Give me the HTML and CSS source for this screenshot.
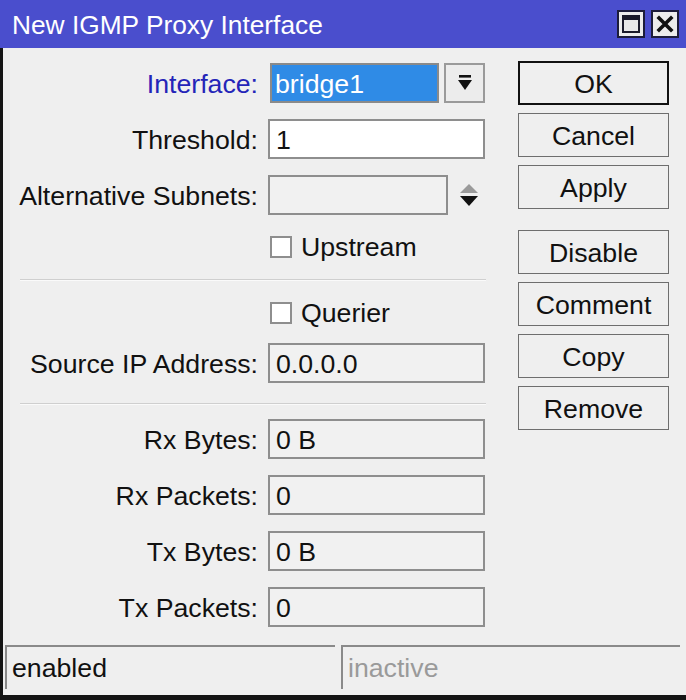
FILE: index.html
```html
<!DOCTYPE html>
<html>
<head>
<meta charset="utf-8">
<link rel="stylesheet" href="styles.css">
</head>
<body>
<div class="window">
  <div class="titlebar">
    <span class="title">New IGMP Proxy Interface</span>
    <div class="tbtns">
      <span class="tbtn">
        <svg width="24" height="24" viewBox="0 0 24 24"><rect x="4" y="4" width="16" height="16" fill="#e8e8e8" stroke="#1a1a2a" stroke-width="2"/><rect x="4" y="4" width="16" height="4" fill="#1a1a2a"/></svg>
      </span>
      <span class="tbtn">
        <svg width="24" height="24" viewBox="0 0 24 24"><path d="M6 6 L18 18 M18 6 L6 18" stroke="#111" stroke-width="3.6" stroke-linecap="square"/></svg>
      </span>
    </div>
  </div>
  <div class="body">
    <div class="main">
      <div class="form">
        <div class="row r1">
          <label class="lbl blue">Interface:</label>
          <div class="ctrl">
            <div class="field sel">bridge1</div>
            <div class="dropbtn">
              <svg width="18" height="20" viewBox="0 0 18 20"><rect x="3" y="2" width="12" height="2.6" fill="#111"/><path d="M2 7 H16 L9 17 Z" fill="#111"/></svg>
            </div>
          </div>
        </div>
        <div class="row r2">
          <label class="lbl">Threshold:</label>
          <div class="ctrl"><div class="field white full">1</div></div>
        </div>
        <div class="row r2">
          <label class="lbl">Alternative Subnets:</label>
          <div class="ctrl">
            <div class="field alt"></div>
            <div class="spinner">
              <svg width="22" height="24" viewBox="0 0 22 24"><path d="M2 10 L11 1 L20 10 Z" fill="#9a9a9a"/><path d="M2 13 L20 13 L11 23 Z" fill="#111"/></svg>
            </div>
          </div>
        </div>
        <div class="row chkrow r2">
          <span class="lbl"></span>
          <div class="ctrl"><span class="chk"></span><span class="chktxt">Upstream</span></div>
        </div>
        <div class="sep s1"></div>
        <div class="row chkrow r-q">
          <span class="lbl"></span>
          <div class="ctrl"><span class="chk"></span><span class="chktxt">Querier</span></div>
        </div>
        <div class="row r-src">
          <label class="lbl">Source IP Address:</label>
          <div class="ctrl"><div class="field full">0.0.0.0</div></div>
        </div>
        <div class="sep s2"></div>
        <div class="row r-src">
          <label class="lbl">Rx Bytes:</label>
          <div class="ctrl"><div class="field full">0 B</div></div>
        </div>
        <div class="row r2">
          <label class="lbl">Rx Packets:</label>
          <div class="ctrl"><div class="field full">0</div></div>
        </div>
        <div class="row r2">
          <label class="lbl">Tx Bytes:</label>
          <div class="ctrl"><div class="field full">0 B</div></div>
        </div>
        <div class="row r2">
          <label class="lbl">Tx Packets:</label>
          <div class="ctrl"><div class="field full">0</div></div>
        </div>
      </div>
      <div class="buttons">
        <div class="btn ok">OK</div>
        <div class="btn">Cancel</div>
        <div class="btn">Apply</div>
        <div class="btn grp">Disable</div>
        <div class="btn">Comment</div>
        <div class="btn">Copy</div>
        <div class="btn">Remove</div>
      </div>
    </div>
    <div class="status">
      <div class="panel p1">enabled</div>
      <div class="panel p2">inactive</div>
    </div>
  </div>
</div>
</body>
</html>
```
FILE: styles.css
```css
html, body {
  margin: 0;
  padding: 0;
  background: #efefef;
}
.window {
  width: 686px;
  height: 700px;
  display: flex;
  flex-direction: column;
  font-family: "Liberation Sans", Arial, sans-serif;
  font-size: 26.7px;
  color: #111;
  overflow: hidden;
}
.titlebar {
  height: 48px;
  flex: none;
  background: #4a4ecd;
  display: flex;
  align-items: center;
  justify-content: space-between;
  padding: 0 7px 0 12px;
  box-sizing: border-box;
}
.title {
  color: #fff;
  font-size: 26.3px;
  padding-top: 2px;
}
.tbtns {
  display: flex;
  gap: 6px;
}
.tbtn {
  width: 28px;
  height: 28px;
  box-sizing: border-box;
  background: #ececec;
  border: 2px solid #1c1c3a;
  display: flex;
  align-items: center;
  justify-content: center;
}
.body {
  flex: 1;
  display: flex;
  flex-direction: column;
  border-left: 3px solid #141414;
  border-bottom: 5px solid #141414;
  background: #efefef;
}
.main {
  flex: 1;
  display: flex;
}
.form {
  width: 482px;
  display: flex;
  flex-direction: column;
}
.row {
  display: flex;
  align-items: center;
  height: 40px;
}
.r1 { margin-top: 15px; }
.r2 { margin-top: 16px; }
.r-q { margin-top: 16px; }
.r-src { margin-top: 14px; }
.chkrow { height: 32px; }
.lbl {
  width: 255px;
  flex: none;
  text-align: right;
  white-space: nowrap;
  padding-top: 2px;
}
.blue { color: #2424b8; }
.ctrl {
  margin-left: 10px;
  display: flex;
  align-items: center;
  width: 217px;
  height: 100%;
}
.field {
  box-sizing: border-box;
  height: 40px;
  border: 2px solid #8e8e8e;
  background: #f1f1f1;
  padding-left: 6px;
  padding-top: 2px;
  display: flex;
  align-items: center;
  white-space: nowrap;
}
.full { width: 217px; }
.white { background: #fff; }
.sel {
  width: 171px;
  margin-left: 2px;
  background: #2f8be6;
  color: #fff;
  padding-left: 3px;
  border-color: #8a8a8a;
}
.dropbtn {
  box-sizing: border-box;
  width: 41px;
  height: 40px;
  margin-left: 5px;
  border: 2px solid #9a9a9a;
  background: #ececec;
  display: flex;
  align-items: center;
  justify-content: center;
}
.alt { width: 180px; }
.spinner {
  margin-left: 10px;
  display: flex;
  align-items: center;
}
.chk {
  width: 22px;
  height: 22px;
  box-sizing: border-box;
  border: 2px solid #8e8e8e;
  background: #fff;
  margin-left: 2px;
}
.chktxt { margin-left: 9px; }
.sep {
  margin-left: 17px;
  width: 466px;
  height: 1px;
  background: #cfcfcf;
  border-bottom: 1px solid #fafafa;
}
.s1 { margin-top: 16px; }
.s2 { margin-top: 20px; }
.buttons {
  margin-left: 33px;
  padding-top: 13px;
  display: flex;
  flex-direction: column;
  gap: 8px;
}
.btn {
  box-sizing: border-box;
  width: 151px;
  height: 44px;
  border: 1px solid #6e6e6e;
  background: #efefef;
  display: flex;
  align-items: center;
  justify-content: center;
  padding-top: 2px;
}
.ok { border: 2px solid #111; }
.grp { margin-top: 13px; }
.status {
  display: flex;
  gap: 6px;
  padding: 0 6px 6px 2px;
}
.panel {
  box-sizing: border-box;
  height: 44px;
  border-top: 2px solid #8a8a8a;
  border-left: 2px solid #8a8a8a;
  display: flex;
  align-items: center;
  padding-left: 5px;
}
.p1 { width: 330px; }
.p2 { flex: 1; color: #9a9a9a; }
```
